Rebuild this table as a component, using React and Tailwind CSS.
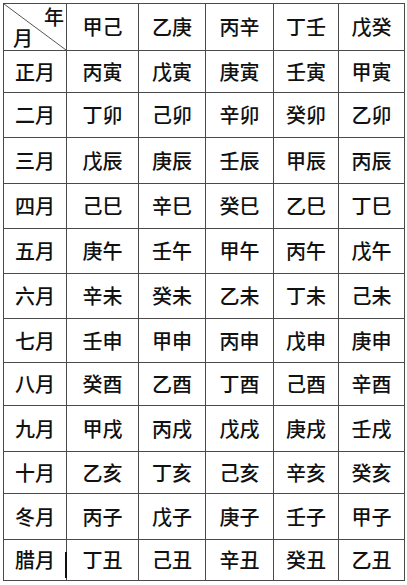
import React from "react";

const header = ["甲己", "乙庚", "丙辛", "丁壬", "戊癸"];
const rows = [
  ["正月", "丙寅", "戊寅", "庚寅", "壬寅", "甲寅"],
  ["二月", "丁卯", "己卯", "辛卯", "癸卯", "乙卯"],
  ["三月", "戊辰", "庚辰", "壬辰", "甲辰", "丙辰"],
  ["四月", "己巳", "辛巳", "癸巳", "乙巳", "丁巳"],
  ["五月", "庚午", "壬午", "甲午", "丙午", "戊午"],
  ["六月", "辛未", "癸未", "乙未", "丁未", "己未"],
  ["七月", "壬申", "甲申", "丙申", "戊申", "庚申"],
  ["八月", "癸酉", "乙酉", "丁酉", "己酉", "辛酉"],
  ["九月", "甲戌", "丙戌", "戊戌", "庚戌", "壬戌"],
  ["十月", "乙亥", "丁亥", "己亥", "辛亥", "癸亥"],
  ["冬月", "丙子", "戊子", "庚子", "壬子", "甲子"],
  ["腊月", "丁丑", "己丑", "辛丑", "癸丑", "乙丑"],
];

const cell =
  "flex items-center justify-center border-r border-b border-[#4a4a4a] text-[20px] font-medium leading-none text-[#111]";

export default function App() {
  return (
    <div
      className="w-[407px] h-[585px] bg-white pl-[3px] pt-[3px]"
      style={{ fontFamily: '"Noto Sans CJK SC", "Noto Sans", sans-serif' }}
    >
      <div className="grid w-fit grid-cols-[63px_72px_67px_68px_65px_66px] grid-rows-[47px_42px_45px_46px_45px_45px_45px_44px_43px_46px_42px_46px_41px] border-l border-t border-[#4a4a4a]">
        <div className="relative border-r border-b border-[#4a4a4a] text-[20px] font-medium leading-none text-[#111]">
          <svg className="absolute inset-0 h-full w-full" viewBox="0 0 62 46" preserveAspectRatio="none">
            <line x1="0" y1="0" x2="62" y2="46" stroke="#555" strokeWidth="1" />
          </svg>
          <div className="flex h-full flex-col justify-between pl-[9px] pr-[2px] pt-[3px] pb-[2px]">
            <span className="self-end">年</span>
            <span className="self-start">月</span>
          </div>
        </div>
        {header.map((h) => (
          <div key={h} className={cell}>
            {h}
          </div>
        ))}
        {rows.map((r, ri) =>
          r.map((c, ci) => (
            <div key={ri + "-" + ci} className={cell + (ri === 11 && ci === 0 ? " relative" : "")}>
              {c}
              {ri === 11 && ci === 0 && (
                <div className="absolute right-[-1px] bottom-[2px] h-[26px] w-[2px] bg-[#111]" />
              )}
            </div>
          ))
        )}
      </div>
    </div>
  );
}
